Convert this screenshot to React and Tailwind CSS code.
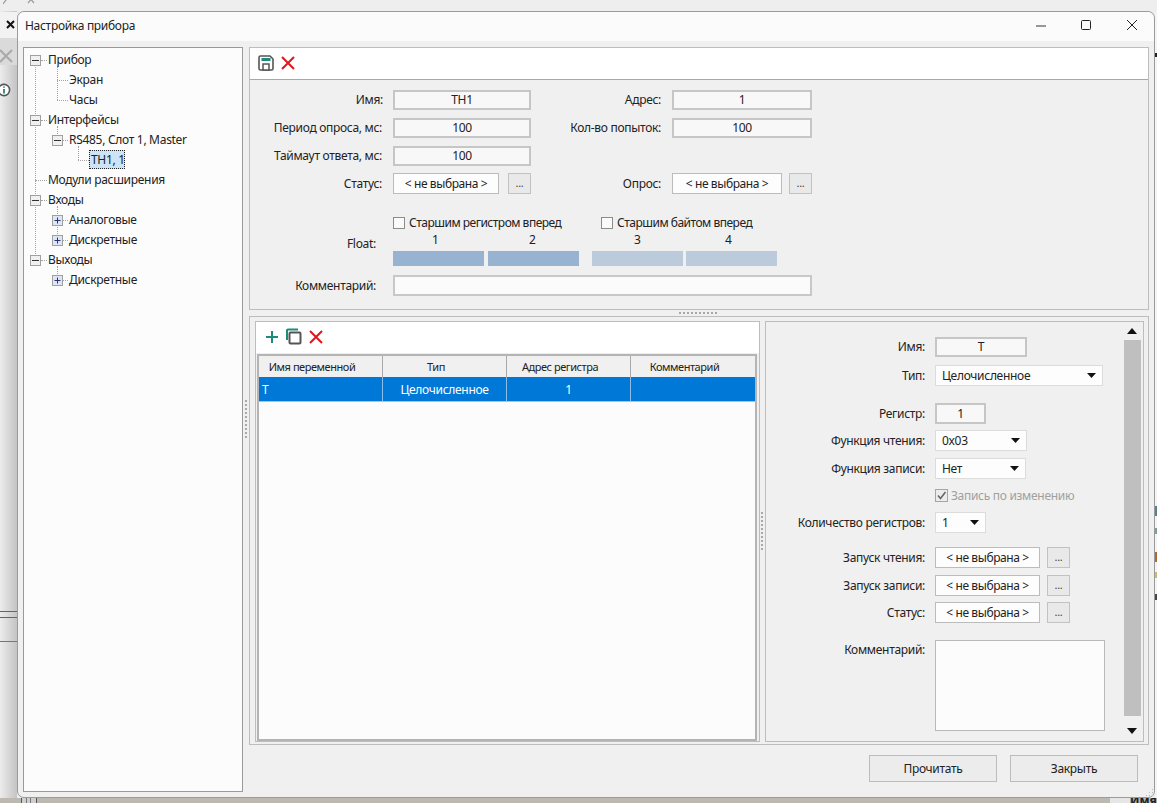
import React from "react";

const F = "font-['Noto_Sans','Liberation_Sans',sans-serif] tracking-[-0.3px]";

function L({ c, children }) {
  return <div className={"absolute whitespace-nowrap text-right -translate-x-full leading-[16px] text-[12px] text-[#222] " + c}>{children}</div>;
}
function T({ c, children }) {
  return <div className={"absolute whitespace-nowrap leading-[16px] text-[12px] text-[#222] " + c}>{children}</div>;
}
function Box({ c, children }) {
  return <div className={"absolute flex items-center justify-center border-2 border-[#c6c6c6] bg-[#f8f8f8] text-[12px] text-[#222] " + c}>{children}</div>;
}
function Pick({ c }) {
  return <div className={"absolute flex items-center justify-center border border-[#bcbcbc] bg-[#fdfdfd] text-[12px] tracking-[-0.4px] text-[#222] " + c}>&lt; не выбрана &gt;</div>;
}
function Dots({ c }) {
  return <div className={"absolute flex items-center justify-center border border-[#c2c2c2] bg-[#e9e9e9] text-[11px] text-[#444] " + c}>...</div>;
}
function Sel({ c, children }) {
  return (
    <div className={"absolute flex items-center justify-between pl-[6px] pr-[6px] border border-[#dcdcdc] bg-[#fdfdfd] text-[12px] text-[#222] " + c}>
      <span>{children}</span>
      <svg width="9" height="5" viewBox="0 0 9 5"><path d="M0 0h9L4.5 5z" fill="#111" /></svg>
    </div>
  );
}
function Exp({ c, plus }) {
  return (
    <div className={"absolute w-[11px] h-[11px] border border-[#a0a0a0] flex items-center justify-center " + (plus ? "bg-[#dfe6f3] " : "bg-[#f0f0f0] ") + c}>
      <svg width="9" height="9" viewBox="0 0 9 9">
        <path d={plus ? "M1.5 4.5h6M4.5 1.5v6" : "M1 4.5h7"} stroke={plus ? "#26337a" : "#333"} strokeWidth="1" fill="none" />
      </svg>
    </div>
  );
}
function V({ c }) {
  return <div className={"absolute w-0 border-l border-dotted border-[#a4a4a4] " + c} />;
}
function H({ c }) {
  return <div className={"absolute h-0 border-t border-dotted border-[#a4a4a4] " + c} />;
}
function RedX({ c }) {
  return (
    <svg className={"absolute " + c} width="14" height="14" viewBox="0 0 14 14">
      <path d="M1 1l12 12M13 1L1 13" stroke="#e2141c" strokeWidth="2" fill="none" />
    </svg>
  );
}
function GripDots({ c, vertical }) {
  return (
    <div className={"absolute flex gap-[2px] " + (vertical ? "flex-col " : "") + c}>
      {Array.from({ length: 10 }).map((_, i) => (
        <div key={i} className="w-[2px] h-[2px] bg-[#a8a8a8]" />
      ))}
    </div>
  );
}

export default function App() {
  return (
    <div className={"relative w-[1157px] h-[803px] overflow-hidden bg-[#ececec] " + F}>
      {/* background behind the dialog */}
      <div className="absolute left-0 top-[11px] w-[17px] h-[792px] bg-gradient-to-r from-[#ececec] to-[#c4c4c4]" />
      <div className="absolute left-0 top-0 w-[1157px] h-[11px] bg-[#eeeeee]" />
      <svg className="absolute left-[3px] top-[-5px]" width="32" height="10" viewBox="0 0 32 10">
        <path d="M0 1l3 4-3 4M25 1l6 7M31 1l-6 7" stroke="#999" strokeWidth="1.2" fill="none" />
      </svg>
      <div className="absolute left-0 top-[12px] w-[17px] h-[26px] bg-[#f2f2f2]" />
      <svg className="absolute left-[6px] top-[20px]" width="9" height="9" viewBox="0 0 9 9">
        <path d="M1 1l7 7M8 1L1 8" stroke="#111" strokeWidth="2" fill="none" />
      </svg>
      <div className="absolute left-0 top-[38px] w-[17px] h-[27px] bg-[#dadada]" />
      <svg className="absolute left-0 top-[49px]" width="13" height="14" viewBox="0 0 13 14">
        <path d="M0 1l12 12M12 1L0 13" stroke="#a9a9a9" strokeWidth="2" fill="none" />
      </svg>
      <svg className="absolute left-[-3px] top-[83px]" width="14" height="14" viewBox="0 0 14 14">
        <circle cx="7" cy="7" r="5.6" stroke="#555" strokeWidth="1.6" fill="#fff" />
        <path d="M7 6v4.4M7 3.4v1.4" stroke="#1e8a78" strokeWidth="1.8" />
      </svg>
      <div className="absolute left-0 top-[611px] w-[17px] h-px bg-[#666]" />
      <div className="absolute left-0 top-[617px] w-[17px] h-px bg-[#666]" />
      <div className="absolute left-0 top-[641px] w-[17px] h-px bg-[#777]" />
      <div className="absolute left-0 top-[798px] w-[1157px] h-[5px] bg-[#bdb9b2]" />
      <div className="absolute left-[21px] top-[798px] w-[16px] h-[5px] bg-[#cfcfcf] border-x border-[#555]" />
      <div className="absolute left-[26px] top-[798px] w-[5px] h-[5px] border-x border-[#777]" />
      <div className="absolute left-[1110px] top-[798px] w-[20px] h-[5px] bg-[#e6e6e6]" />
      <div className="absolute left-[1130px] top-[794px] text-[12px] leading-[14px] font-bold tracking-normal text-[#222]">Имя</div>
      <div className="absolute left-[1155px] top-[11px] w-[2px] h-[787px] bg-[#f4f4f4]" />
      <div className="absolute left-[1155px] top-[53px] w-[2px] h-[4px] bg-[#222]" />
      <div className="absolute left-[1155px] top-[506px] w-[2px] h-[10px] bg-[#5d7f8a]" />
      <div className="absolute left-[1155px] top-[528px] w-[2px] h-[6px] bg-[#7fa08a]" />
      <div className="absolute left-[1155px] top-[552px] w-[2px] h-[10px] bg-[#a86a3a]" />
      <div className="absolute left-[1155px] top-[572px] w-[2px] h-[6px] bg-[#c9b878]" />
      <div className="absolute left-[1155px] top-[594px] w-[2px] h-[6px] bg-[#444]" />

      {/* dialog */}
      <div className="absolute left-[17px] top-[11px] w-[1138px] h-[787px] rounded-[7px] border border-[#9b9b9b] bg-[#f0f0f0]" />
      <div className="absolute left-[18px] top-[12px] w-[1136px] h-[29px] rounded-t-[7px] bg-[#fbfbfb]" />
      <div className="absolute left-[25px] top-[18px] text-[12px] leading-[16px] text-[#222]">Настройка прибора</div>
      <svg className="absolute left-[1035px] top-[17px]" width="110" height="16" viewBox="0 0 110 16">
        <path d="M1 9h10" stroke="#333" strokeWidth="1" fill="none" />
        <rect x="46.5" y="3.5" width="9" height="9" rx="1" stroke="#222" strokeWidth="1" fill="none" />
        <path d="M92 3l10 10M102 3L92 13" stroke="#222" strokeWidth="1" fill="none" />
      </svg>

      {/* tree */}
      <div className="absolute left-[23px] top-[47px] w-[220px] h-[745px] border border-[#9a9a9a] bg-[#fcfcfc]" />
      <V c="left-[35px] top-[60px] h-[200px]" />
      <V c="left-[57px] top-[66px] h-[34px]" />
      <V c="left-[57px] top-[126px] h-[14px]" />
      <V c="left-[78px] top-[146px] h-[14px]" />
      <V c="left-[57px] top-[206px] h-[34px]" />
      <V c="left-[57px] top-[266px] h-[14px]" />
      <H c="left-[41px] top-[60px] w-[6px]" />
      <H c="left-[57px] top-[80px] w-[11px]" />
      <H c="left-[57px] top-[100px] w-[11px]" />
      <H c="left-[41px] top-[120px] w-[6px]" />
      <H c="left-[63px] top-[140px] w-[5px]" />
      <H c="left-[78px] top-[160px] w-[11px]" />
      <H c="left-[35px] top-[180px] w-[12px]" />
      <H c="left-[41px] top-[200px] w-[6px]" />
      <H c="left-[63px] top-[220px] w-[5px]" />
      <H c="left-[63px] top-[240px] w-[5px]" />
      <H c="left-[41px] top-[260px] w-[6px]" />
      <H c="left-[63px] top-[280px] w-[5px]" />
      <Exp c="left-[30px] top-[55px]" />
      <Exp c="left-[30px] top-[115px]" />
      <Exp c="left-[52px] top-[135px]" />
      <Exp c="left-[30px] top-[195px]" />
      <Exp c="left-[52px] top-[215px]" plus />
      <Exp c="left-[52px] top-[235px]" plus />
      <Exp c="left-[30px] top-[255px]" />
      <Exp c="left-[52px] top-[275px]" plus />
      <T c="left-[48px] top-[52px]">Прибор</T>
      <T c="left-[69px] top-[72px]">Экран</T>
      <T c="left-[69px] top-[92px]">Часы</T>
      <T c="left-[48px] top-[112px]">Интерфейсы</T>
      <T c="left-[69px] top-[132px]">RS485, Слот 1, Master</T>
      <div className="absolute left-[89px] top-[150px] w-[36px] h-[19px] bg-[#cce4f7] border border-dotted border-[#222]" />
      <T c="left-[91px] top-[152px]">TH1, 1</T>
      <T c="left-[48px] top-[172px]">Модули расширения</T>
      <T c="left-[48px] top-[192px]">Входы</T>
      <T c="left-[69px] top-[212px]">Аналоговые</T>
      <T c="left-[69px] top-[232px]">Дискретные</T>
      <T c="left-[48px] top-[252px]">Выходы</T>
      <T c="left-[69px] top-[272px]">Дискретные</T>

      <GripDots vertical c="left-[245px] top-[400px]" />

      {/* top panel */}
      <div className="absolute left-[249px] top-[47px] w-[900px] h-[263px] border border-[#bdbdbd]" />
      <div className="absolute left-[250px] top-[48px] w-[898px] h-[32px] bg-white border-b border-[#a8a8a8]" />
      <svg className="absolute left-[258px] top-[55px]" width="16" height="16" viewBox="0 0 16 16">
        <path d="M2.5 1h9.5l3 3v9.5a1.5 1.5 0 0 1-1.5 1.5h-11A1.5 1.5 0 0 1 1 13.500v-11A1.500 1.500 0 0 1 2.500 1z" stroke="#555" strokeWidth="1.6" fill="#fff" />
        <rect x="3.500" y="3" width="9" height="3" fill="#1e8a78" />
        <rect x="5" y="9" width="6" height="6" stroke="#555" strokeWidth="1.500" fill="#fff" />
      </svg>
      <RedX c="left-[281px] top-[56px]" />

      <L c="left-[383px] top-[92px]">Имя:</L>
      <L c="left-[382px] top-[120px]">Период опроса, мс:</L>
      <L c="left-[382px] top-[148px]">Таймаут ответа, мс:</L>
      <L c="left-[382px] top-[176px]">Статус:</L>
      <L c="left-[661px] top-[92px]">Адрес:</L>
      <L c="left-[661px] top-[120px]">Кол-во попыток:</L>
      <L c="left-[661px] top-[176px]">Опрос:</L>
      <L c="left-[376px] top-[236px]">Float:</L>
      <L c="left-[376px] top-[278px]">Комментарий:</L>

      <Box c="left-[393px] top-[90px] w-[138px] h-[20px]">TH1</Box>
      <Box c="left-[393px] top-[118px] w-[138px] h-[20px]">100</Box>
      <Box c="left-[393px] top-[146px] w-[138px] h-[20px]">100</Box>
      <Pick c="left-[393px] top-[173px] w-[106px] h-[21px]" />
      <Dots c="left-[508px] top-[173px] w-[23px] h-[21px]" />
      <Box c="left-[672px] top-[90px] w-[140px] h-[20px]">1</Box>
      <Box c="left-[672px] top-[118px] w-[140px] h-[20px]">100</Box>
      <Pick c="left-[672px] top-[173px] w-[110px] h-[21px]" />
      <Dots c="left-[789px] top-[173px] w-[23px] h-[21px]" />

      <div className="absolute left-[393px] top-[217px] w-[12px] h-[12px] border border-[#8c8c8c] bg-[#fafafa]" />
      <T c="left-[409px] top-[215px] tracking-[-0.5px]">Старшим регистром вперед</T>
      <div className="absolute left-[601px] top-[217px] w-[12px] h-[12px] border border-[#8c8c8c] bg-[#fafafa]" />
      <T c="left-[617px] top-[215px] tracking-[-0.5px]">Старшим байтом вперед</T>
      <T c="left-[432px] top-[232px]">1</T>
      <T c="left-[529px] top-[232px]">2</T>
      <T c="left-[634px] top-[232px]">3</T>
      <T c="left-[725px] top-[232px]">4</T>
      <div className="absolute left-[393px] top-[251px] w-[91px] h-[15px] bg-[#98b2d2]" />
      <div className="absolute left-[488px] top-[251px] w-[91px] h-[15px] bg-[#98b2d2]" />
      <div className="absolute left-[592px] top-[251px] w-[91px] h-[15px] bg-[#bccbdc]" />
      <div className="absolute left-[686px] top-[251px] w-[91px] h-[15px] bg-[#bccbdc]" />
      <div className="absolute left-[393px] top-[275px] w-[419px] h-[21px] border-2 border-[#c8c8c8] bg-[#fbfbfb]" />

      <GripDots c="left-[679px] top-[312px]" />

      {/* bottom panel */}
      <div className="absolute left-[249px] top-[316px] w-[900px] h-[429px] border border-[#bdbdbd]" />

      {/* variables list */}
      <div className="absolute left-[255px] top-[321px] w-[505px] h-[421px] border border-[#bdbdbd]" />
      <div className="absolute left-[256px] top-[322px] w-[503px] h-[31px] bg-white" />
      <svg className="absolute left-[265px] top-[330px]" width="14" height="14" viewBox="0 0 14 14">
        <path d="M7 1v12M1 7h12" stroke="#1e8a78" strokeWidth="2" fill="none" />
      </svg>
      <svg className="absolute left-[285px] top-[328px]" width="18" height="18" viewBox="0 0 18 18">
        <path d="M2 12V2.500a1 1 0 0 1 1-1h10" stroke="#1e8a78" strokeWidth="2" fill="none" />
        <rect x="4.500" y="4.500" width="11" height="11" rx="1" stroke="#555" strokeWidth="2" fill="#fff" />
      </svg>
      <RedX c="left-[309px] top-[330px]" />

      <div className="absolute left-[257px] top-[354px] w-[500px] h-[387px] border-2 border-[#b4b4b4] bg-[#fcfcfc]" />
      <div className="absolute left-[259px] top-[356px] w-[496px] h-[21px] grid grid-cols-[124px_124px_124px_124px] bg-[#f0f0f0] text-[11px] tracking-[-0.45px] leading-[21px] text-[#222]">
        <div className="border-r border-[#a9a9a9] text-center pr-[17px]">Имя переменной</div>
        <div className="border-r border-[#a9a9a9] text-center pr-[17px]">Тип</div>
        <div className="border-r border-[#a9a9a9] text-center pr-[17px]">Адрес регистра</div>
        <div className="text-center pr-[17px]">Комментарий</div>
      </div>
      <div className="absolute left-[259px] top-[377px] w-[496px] h-[25px] grid grid-cols-[124px_124px_124px_124px] bg-[#0078d7] text-[12px] leading-[25px] text-white border-b border-[#a9c4de]">
        <div className="border-r border-[#8dbde6] pl-[3px]">T</div>
        <div className="border-r border-[#8dbde6] text-center">Целочисленное</div>
        <div className="border-r border-[#8dbde6] text-center">1</div>
        <div />
      </div>

      <GripDots vertical c="left-[761px] top-[512px]" />

      {/* property panel */}
      <div className="absolute left-[765px] top-[321px] w-[379px] h-[421px] border border-[#bdbdbd]" />
      <svg className="absolute left-[1127px] top-[328px]" width="10" height="6" viewBox="0 0 10 6"><path d="M0 6h10L5 0z" fill="#111" /></svg>
      <div className="absolute left-[1124px] top-[340px] w-[17px] h-[376px] bg-[#bfbfbf]" />
      <svg className="absolute left-[1127px] top-[728px]" width="10" height="6" viewBox="0 0 10 6"><path d="M0 0h10L5 6z" fill="#111" /></svg>

      <L c="left-[925px] top-[339px]">Имя:</L>
      <L c="left-[925px] top-[368px]">Тип:</L>
      <L c="left-[925px] top-[406px]">Регистр:</L>
      <L c="left-[925px] top-[433px]">Функция чтения:</L>
      <L c="left-[925px] top-[461px]">Функция записи:</L>
      <L c="left-[925px] top-[515px]">Количество регистров:</L>
      <L c="left-[925px] top-[550px]">Запуск чтения:</L>
      <L c="left-[925px] top-[578px]">Запуск записи:</L>
      <L c="left-[925px] top-[605px]">Статус:</L>
      <L c="left-[925px] top-[642px]">Комментарий:</L>

      <Box c="left-[935px] top-[337px] w-[92px] h-[20px]">T</Box>
      <Sel c="left-[935px] top-[365px] w-[168px] h-[21px]">Целочисленное</Sel>
      <Box c="left-[935px] top-[403px] w-[51px] h-[21px]">1</Box>
      <Sel c="left-[935px] top-[430px] w-[92px] h-[21px]">0x03</Sel>
      <Sel c="left-[935px] top-[458px] w-[91px] h-[21px]">Нет</Sel>
      <div className="absolute left-[935px] top-[489px] w-[13px] h-[13px] border border-[#a5a5a5] bg-[#ececec] flex items-center justify-center">
        <svg width="11" height="11" viewBox="0 0 11 11"><path d="M2 5.500l2.500 3L9.500 2" stroke="#666" strokeWidth="1.600" fill="none" /></svg>
      </div>
      <T c="left-[951px] top-[488px] text-[#a0a0a0]">Запись по изменению</T>
      <Sel c="left-[935px] top-[512px] w-[51px] h-[21px]">1</Sel>
      <Pick c="left-[935px] top-[547px] w-[105px] h-[21px]" />
      <Dots c="left-[1047px] top-[547px] w-[23px] h-[21px]" />
      <Pick c="left-[935px] top-[575px] w-[105px] h-[21px]" />
      <Dots c="left-[1047px] top-[575px] w-[23px] h-[21px]" />
      <Pick c="left-[935px] top-[602px] w-[105px] h-[21px]" />
      <Dots c="left-[1047px] top-[602px] w-[23px] h-[21px]" />
      <div className="absolute left-[935px] top-[640px] w-[170px] h-[91px] border border-[#b9b9b9] bg-[#fcfcfc]" />

      {/* buttons */}
      <div className="absolute left-[869px] top-[755px] w-[128px] h-[27px] flex items-center justify-center border border-[#bcbcbc] bg-[#ececec] text-[12px] text-[#222]">Прочитать</div>
      <div className="absolute left-[1010px] top-[755px] w-[128px] h-[27px] flex items-center justify-center border border-[#bcbcbc] bg-[#ececec] text-[12px] text-[#222]">Закрыть</div>
      <svg className="absolute left-[1145px] top-[788px]" width="9" height="9" viewBox="0 0 9 9">
        <path d="M7 1h1v1H7zM4 4h1v1H4zM7 4h1v1H7zM1 7h1v1H1zM4 7h1v1H4zM7 7h1v1H7z" fill="#bbb" />
      </svg>
    </div>
  );
}
